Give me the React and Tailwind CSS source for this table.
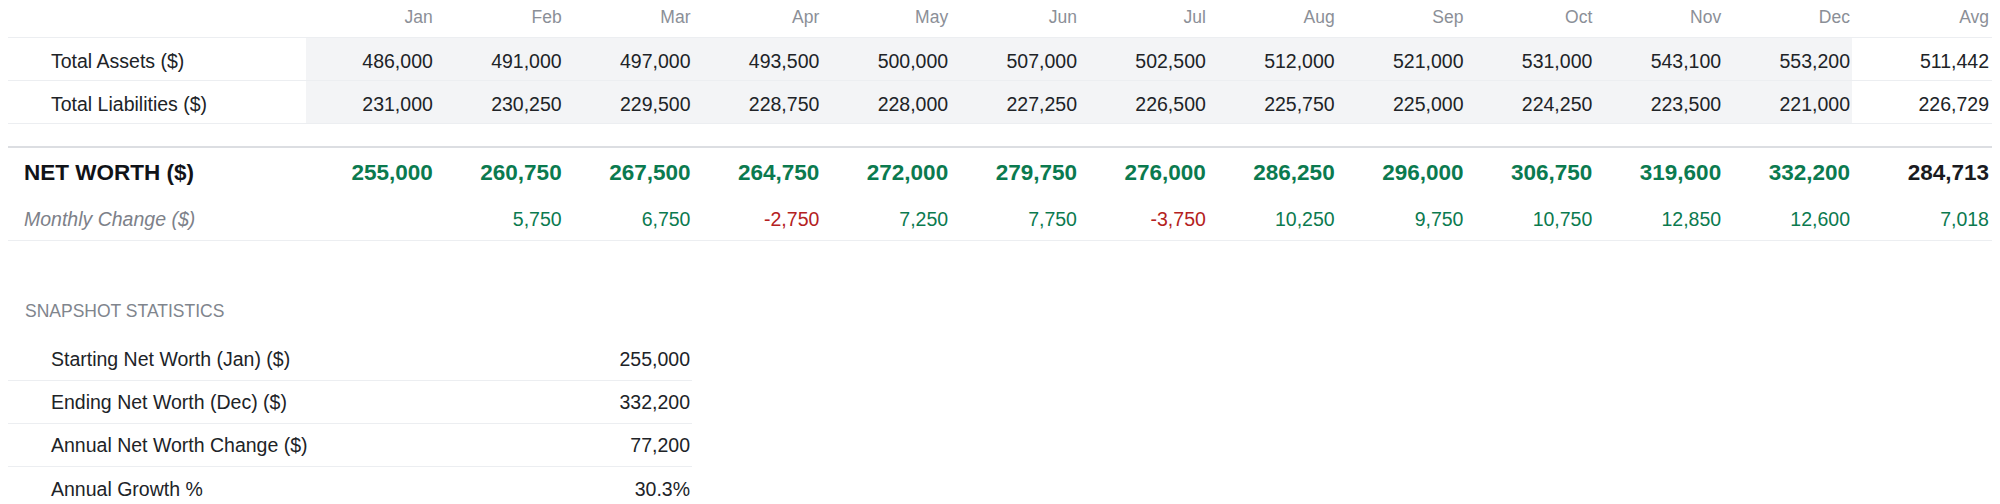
import React from "react";

const months = ["Jan", "Feb", "Mar", "Apr", "May", "Jun", "Jul", "Aug", "Sep", "Oct", "Nov", "Dec"];

const assets = ["486,000", "491,000", "497,000", "493,500", "500,000", "507,000", "502,500", "512,000", "521,000", "531,000", "543,100", "553,200"];
const liabilities = ["231,000", "230,250", "229,500", "228,750", "228,000", "227,250", "226,500", "225,750", "225,000", "224,250", "223,500", "221,000"];
const netWorth = ["255,000", "260,750", "267,500", "264,750", "272,000", "279,750", "276,000", "286,250", "296,000", "306,750", "319,600", "332,200"];
const changes = ["", "5,750", "6,750", "-2,750", "7,250", "7,750", "-3,750", "10,250", "9,750", "10,750", "12,850", "12,600"];

const stats = [
  ["Starting Net Worth (Jan) ($)", "255,000"],
  ["Ending Net Worth (Dec) ($)", "332,200"],
  ["Annual Net Worth Change ($)", "77,200"],
  ["Annual Growth %", "30.3%"],
];

const grid = "grid grid-cols-[298px_repeat(12,minmax(0,1fr))_140px]";

function App() {
  return (
    <div className="min-h-screen bg-white px-2 font-['Liberation_Sans',Arial,sans-serif] text-[#202327]">
      {/* Monthly table */}
      <div className={`${grid} h-[38px] border-b border-[#eceef1] text-[17.5px] leading-[20px] text-[#8b8f97]`}>
        <div></div>
        {months.map((m) => (
          <div key={m} className="pt-[7px] pr-[2px] text-right">
            {m}
          </div>
        ))}
        <div className="pt-[7px] pr-[3px] text-right">Avg</div>
      </div>

      {[
        ["Total Assets ($)", assets, "511,442"],
        ["Total Liabilities ($)", liabilities, "226,729"],
      ].map(([label, vals, avg]) => (
        <div
          key={label}
          className={`${grid} h-[43px] border-b border-[#eceef1] text-[19.5px] leading-[24px]`}
        >
          <div className="flex items-center pt-[3px] pl-[43px]">{label}</div>
          {vals.map((v, i) => (
            <div key={i} className="flex items-center justify-end bg-[#f3f4f6] pt-[3px] pr-[2px]">
              {v}
            </div>
          ))}
          <div className="flex items-center justify-end pt-[3px] pr-[3px]">{avg}</div>
        </div>
      ))}

      <div className="h-[24px] border-b-2 border-[#dcdee2]"></div>

      {/* Net worth */}
      <div className={`${grid} h-[49px] text-[22.5px] leading-[26px] font-bold`}>
        <div className="flex items-center pl-[16px] text-[#111318]">NET WORTH ($)</div>
        {netWorth.map((v, i) => (
          <div key={i} className="flex items-center justify-end pr-[2px] text-[#0b7a4f]">
            {v}
          </div>
        ))}
        <div className="flex items-center justify-end pr-[3px] text-[#1a1b1f]">284,713</div>
      </div>

      <div className={`${grid} h-[44px] border-b border-[#eceef1] text-[19.5px] leading-[24px]`}>
        <div className="flex items-center pl-[16px] italic text-[#7d8189]">Monthly Change ($)</div>
        {changes.map((v, i) => (
          <div
            key={i}
            className={`flex items-center justify-end pr-[2px] ${v.startsWith("-") ? "text-[#b42121]" : "text-[#0b7a4f]"}`}
          >
            {v}
          </div>
        ))}
        <div className="flex items-center justify-end pr-[3px] text-[#0b7a4f]">7,018</div>
      </div>

      {/* Snapshot statistics */}
      <div className="mt-[60px] w-[684px]">
        <div className="pl-[17px] text-[17.5px] leading-[20px] text-[#80858d] uppercase">
          Snapshot Statistics
        </div>
        <div className="mt-[17px]">
          {stats.map(([label, value], i) => (
            <div
              key={label}
              className={`flex h-[43px] items-center justify-between text-[19.5px] leading-[24px] ${i < stats.length - 1 ? "border-b border-[#eceef1]" : ""}`}
            >
              <span className="pl-[43px]">{label}</span>
              <span className="pr-[2px]">{value}</span>
            </div>
          ))}
        </div>
      </div>
    </div>
  );
}

export default App;
